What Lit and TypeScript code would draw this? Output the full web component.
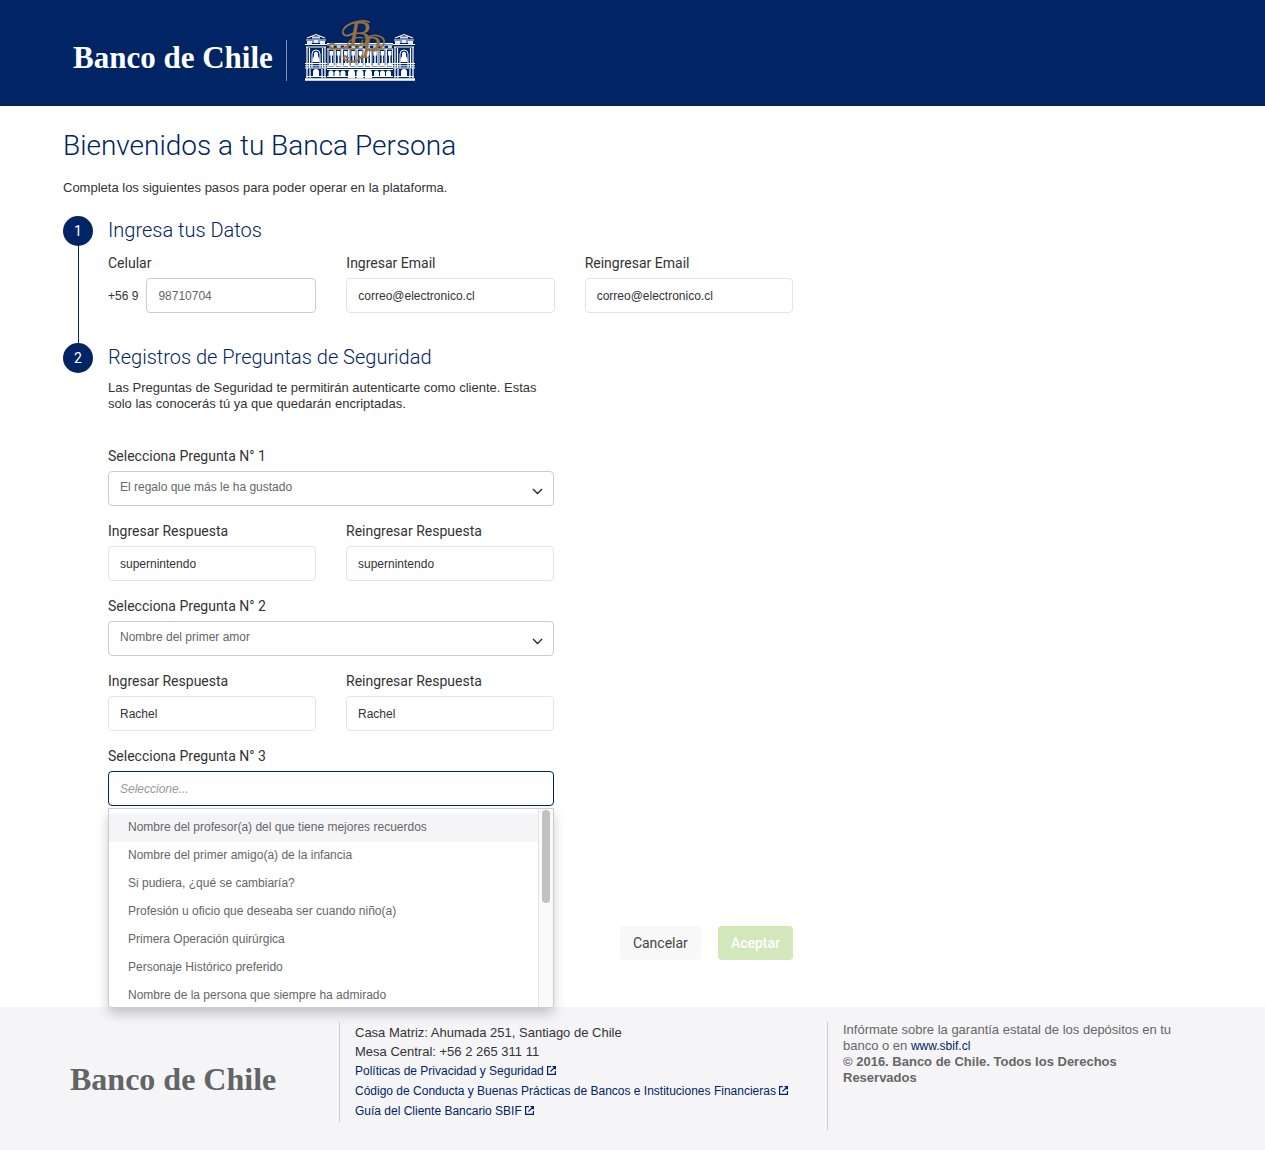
import { LitElement, html, css, svg } from "lit";
import { customElement, property, state } from "lit/decorators.js";

const range = (n: number) => Array.from({ length: n }, (_, i) => i);

@customElement("bank-building")
class BankBuilding extends LitElement {
  static styles = css`
    :host { display: block; }
    svg { display: block; width: 111px; height: 62px; overflow: visible; }
    .monogram { font: italic 400 36px "Liberation Serif", serif; }
    .monogram-small { font-size: 32px; }
  `;

  private wing(x: number) {
    return svg`<g transform="translate(${x} 0)">
      <path d="M1 20h20M2 18l4-1.5 5-2 5 2 4 1.5M0 24.5h22M2 22h18M1 27h20" fill="none" stroke="#fff" stroke-width="1.1"/>
      <path d="M7 16.5h8v2H7zM2 21h5v3H2zM9 20h4v3H9zM15 21h5v3h-5z" fill="#fff" opacity=".85"/>
      <path d="M2 27v22M4.500 28v20M17.500 28v20M20 27v22" stroke="#fff" stroke-width="1.200"/>
      <path d="M7 48V34a4 4 0 0 1 8 0v14" fill="none" stroke="#fff" stroke-width="1"/>
      <path d="M9 33q2-3 4 0v3l1.500 3v3h-7v-3L9 36z" fill="#fff"/>
      <path d="M0 43.500h22M0 45.800h22M0 48h22" stroke="#fff" stroke-width="1"/>
      <path d="M2 49v9M5 49v9M17 49v9M20 49v9" stroke="#fff" stroke-width="1.300"/>
      <path d="M8 56v-4a3 3 0 0 1 6 0v4z" fill="#fff"/>
      <path d="M1 56.500h20" stroke="#fff" stroke-width="1"/>
    </g>`;
  }

  render() {
    return html`<svg viewBox="0 0 111 62" role="img" aria-label="Edificio Banco de Chile">
      <path d="M22 23.500h66M22 25h66M22 29h66M22 46h66M22 47.500h66M22 49.500h66M22 56.500h66" stroke="#fff" stroke-width="1"/>
      ${range(9).map((i) => svg`<g transform="translate(${22.5 + i * 7.3} 0)">
        <path d="M2 25.500h4v2.500H2z" fill="#fff" opacity=".8"/>
        <path d="M.5 29v18.500M6.500 29v18.500" stroke="#fff" stroke-width="1"/>
        <path d="M2 31h3.500v4.500H4.500V43H6v3H1.500v-3H3v-7.500H2z" fill="#fff"/>
      </g>`)}
      ${[23.5, 29.5, 35.5, 69, 75, 81].map((x) => svg`
        <path d="M${x} 56v-3a2.500 2.500 0 0 1 5 0v3z" fill="#fff"/>`)}
      ${[43, 51.5, 60].map((x) => svg`
        <path d="M${x} 58v-5a3.500 3.500 0 0 1 7 0v5z" fill="#fff"/>`)}
      ${this.wing(0)}${this.wing(88)}
      <path d="M0 59.500h110" stroke="#fff" stroke-width="2.600"/>
      <text class="monogram" x="43" y="26" fill="#96713f">B<tspan class="monogram-small" dx="-9" dy="12">P</tspan></text>
      <path d="M64 2C54-2 36 6 38 13c1 4 8 3 12-1M45 25c-5 4-17 5-20 2-2-3 2-5 5-2M62 18c7-5 19-2 17 5-2 7-10 9-16 7M57 36c-4 6-12 7-17 4-2-3 0-5 3-2" fill="none" stroke="#96713f" stroke-width="1.800" stroke-linecap="round"/>
      <path d="M58 18c-9-3-20 6-14 11 6 3 12-4 14-9" fill="none" stroke="#96713f" stroke-width="1.200" stroke-linecap="round"/>
    </svg>`;
  }
}

@customElement("form-step")
class FormStep extends LitElement {
  @property() number = "";
  @property() heading = "";
  static styles = css`
    :host { display: grid; grid-template-columns: 30px minmax(0, 1fr); column-gap: 15px; }
    .rail { display: flex; flex-direction: column; align-items: center; }
    .badge { width: 30px; height: 30px; border-radius: 50%; background: #002464; color: #fff; font: 14px/30px Roboto, sans-serif; text-align: center; }
    .line { flex: 1; width: 1px; background: #002464; }
    :host([last]) .line { display: none; }
    .heading { margin: 0; font: 300 20px/28px Roboto, sans-serif; color: #002464; }
  `;
  render() {
    return html`<div class="rail"><span class="badge">${this.number}</span><span class="line"></span></div>
      <section><h2 class="heading">${this.heading}</h2><slot></slot></section>`;
  }
}

const QUESTIONS = [
  "Nombre del profesor(a) del que tiene mejores recuerdos",
  "Nombre del primer amigo(a) de la infancia",
  "Si pudiera, ¿qué se cambiaría?",
  "Profesión u oficio que deseaba ser cuando niño(a)",
  "Primera Operación quirúrgica",
  "Personaje Histórico preferido",
  "Nombre de la persona que siempre ha admirado",
];

const ANSWERED = [
  { question: "El regalo que más le ha gustado", answer: "supernintendo" },
  { question: "Nombre del primer amor", answer: "Rachel" },
];

const LINKS = [
  "Políticas de Privacidad y Seguridad",
  "Código de Conducta y Buenas Prácticas de Bancos e Instituciones Financieras",
  "Guía del Cliente Bancario SBIF",
];

@customElement("app-root")
class AppRoot extends LitElement {
  @state() private active = 0;

  static styles = css`
    :host { display: flex; flex-direction: column; min-height: 100vh; background: #fff; color: #333; font: 13px/16px "Liberation Sans", Arial, sans-serif; }
    * { box-sizing: border-box; }
    .header { display: flex; align-items: flex-start; padding: 20px 73px 24px; background: #002464; }
    .wordmark { font: 700 31px/40px "Liberation Serif", serif; white-space: nowrap; }
    .header .wordmark { margin-top: 18px; color: #fff; }
    .divider { width: 1px; height: 41px; margin: 20px 18px 0 13px; background: #7f91b1; }
    .main { padding: 20px 63px 47px; }
    .title { margin: 0; font: 300 28px/40px Roboto, sans-serif; color: #002464; }
    .intro { margin: 14px 0 20px; }
    .form { max-width: 730px; }
    .contact { display: grid; grid-template-columns: repeat(3, minmax(0, 1fr)); column-gap: 30px; padding: 4px 0 30px; }
    .questions { display: grid; grid-template-columns: repeat(2, minmax(0, 1fr)); gap: 10px 30px; max-width: 446px; }
    .wide { grid-column: 1 / -1; }
    .help { max-width: 446px; margin: 9px 0 29px; }
    .label { display: block; font: 400 14px/30px Roboto, sans-serif; color: #333; }
    .input { display: block; width: 100%; height: 35px; padding: 0 11px; border: 1px solid #e4e4e4; border-radius: 4px; background: #fff; color: #333; font: 12px/16px "Liberation Sans", Arial, sans-serif; outline: none; }
    .phone { display: flex; align-items: center; gap: 8px; font-size: 12px; }
    .phone .input, .select { border-color: #ccc; color: #666; }
    .phone .input { flex: 1; min-width: 0; }
    .prefix { white-space: nowrap; }
    .picker { position: relative; }
    .select { appearance: none; padding: 0 30px 4px 11px; }
    .chevron { position: absolute; right: 11px; top: 16px; width: 11px; height: 9px; pointer-events: none; }
    .search { border-color: #002464; }
    .search::placeholder { color: #999; font-style: italic; opacity: 1; }
    .menu { position: absolute; z-index: 2; top: 37px; left: 0; right: 0; height: 200px; overflow: hidden; display: flex; border: 1px solid #ccc; border-radius: 0 0 4px 4px; background: #fff; box-shadow: 0 6px 12px rgba(0, 0, 0, 0.2); }
    .options { flex: 1; margin: 0; padding: 5px 0; list-style: none; }
    .option { padding: 0 19px 2px; font-size: 12px; line-height: 26px; color: #666; cursor: pointer; }
    .option.active { background: #f5f5f8; }
    .track { width: 15px; padding: 1px 3px; border-left: 1px solid #e4e4e4; background: #fafafa; }
    .thumb { width: 8px; height: 93px; border-radius: 4px; background: #c1c1c1; }
    .actions { display: flex; justify-content: flex-end; gap: 17px; padding-top: 120px; max-width: 730px; }
    .button { height: 34px; padding: 0 13px; border: 0; border-radius: 4px; font: 400 14px/34px Roboto, sans-serif; background: #f8f8f8; color: #444; }
    .button.primary { background: #d3e7bc; color: #fff; font-weight: 500; }
    .footer { flex: 1; display: grid; grid-template-columns: 269px 488px minmax(0, 1fr); align-items: start; padding: 15px 70px 20px; background: #f5f5f8; }
    .footer .wordmark { padding-top: 37px; color: #636466; font-size: 32px; }
    .column { padding: 0 15px; border-left: 1px solid #ccc; }
    .addresses { min-height: 100px; padding-top: 1px; line-height: 19px; }
    .link { color: #002464; text-decoration: none; font-size: 12px; }
    .links { line-height: 20px; }
    .external { width: 9px; height: 9px; margin-left: 3px; }
    .legal { min-height: 108px; color: #666; }
    .legal-text { max-width: 336px; margin: 0; }
    .copyright { font-weight: 700; }
    @media (max-width: 1000px) {
      .footer { grid-template-columns: 1fr; gap: 20px; }
    }
  `;

  private field(id: string, label: string, value: string) {
    return html`<div><label class="label" for=${id}>${label}</label>
      <input class="input" id=${id} .value=${value} /></div>`;
  }

  private question(q: { question: string; answer: string }, n: number) {
    return html`<div class="wide">
        <label class="label" for="q${n}">Selecciona Pregunta N° ${n}</label>
        <div class="picker">
          <select class="input select" id="q${n}"><option>${q.question}</option></select>
          <svg class="chevron" viewBox="0 0 11 9" aria-hidden="true"><path d="M1 2l4.500 4.500L10 2" fill="none" stroke="#222" stroke-width="1.300"/></svg>
        </div>
      </div>
      ${this.field(`a${n}`, "Ingresar Respuesta", q.answer)}
      ${this.field(`b${n}`, "Reingresar Respuesta", q.answer)}`;
  }

  render() {
    return html`
      <header class="header">
        <span class="wordmark">Banco de Chile</span>
        <span class="divider"></span>
        <bank-building></bank-building>
      </header>
      <main class="main">
        <h1 class="title">Bienvenidos a tu Banca Persona</h1>
        <p class="intro">Completa los siguientes pasos para poder operar en la plataforma.</p>
        <form class="form" @submit=${(e: Event) => e.preventDefault()}>
          <form-step number="1" heading="Ingresa tus Datos">
            <div class="contact">
              <div>
                <label class="label" for="phone">Celular</label>
                <div class="phone"><span class="prefix">+56 9</span><input class="input" id="phone" type="tel" value="98710704" /></div>
              </div>
              ${this.field("email", "Ingresar Email", "correo@electronico.cl")}
              ${this.field("email2", "Reingresar Email", "correo@electronico.cl")}
            </div>
          </form-step>
          <form-step number="2" heading="Registros de Preguntas de Seguridad" last>
            <p class="help">Las Preguntas de Seguridad te permitirán autenticarte como cliente. Estas solo las conocerás tú ya que quedarán encriptadas.</p>
            <div class="questions">
              ${ANSWERED.map((q, i) => this.question(q, i + 1))}
              <div class="wide">
                <label class="label" for="q3">Selecciona Pregunta N° 3</label>
                <div class="picker">
                  <input class="input search" id="q3" role="combobox" aria-expanded="true" aria-controls="q3-menu" placeholder="Seleccione..." />
                  <div class="menu">
                    <ul class="options" id="q3-menu" role="listbox">
                      ${QUESTIONS.map((q, i) => html`<li class="option ${i === this.active ? "active" : ""}" role="option"
                        aria-selected=${i === this.active} @mouseenter=${() => (this.active = i)}>${q}</li>`)}
                    </ul>
                    <div class="track"><div class="thumb"></div></div>
                  </div>
                </div>
              </div>
            </div>
          </form-step>
          <div class="actions">
            <button class="button" type="button">Cancelar</button>
            <button class="button primary" type="submit">Aceptar</button>
          </div>
        </form>
      </main>
      <footer class="footer">
        <span class="wordmark">Banco de Chile</span>
        <div class="column addresses">
          <div>Casa Matriz: Ahumada 251, Santiago de Chile</div>
          <div>Mesa Central: +56 2 265 311 11</div>
          ${LINKS.map((l) => html`<div class="links"><a class="link" href="#">${l}<svg class="external" viewBox="0 0 9 9" aria-hidden="true"><path d="M4 .6H.6v7.800h7.800V5M5.500.6h2.900v2.900M8.200.8L3.500 5.500" fill="none" stroke="currentColor" stroke-width="1.200"/></svg></a></div>`)}
        </div>
        <div class="column legal">
          <p class="legal-text">Infórmate sobre la garantía estatal de los depósitos en tu banco o en <a class="link" href="#">www.sbif.cl</a></p>
          <p class="legal-text copyright">© 2016. Banco de Chile. Todos los Derechos Reservados</p>
        </div>
      </footer>
    `;
  }
}
